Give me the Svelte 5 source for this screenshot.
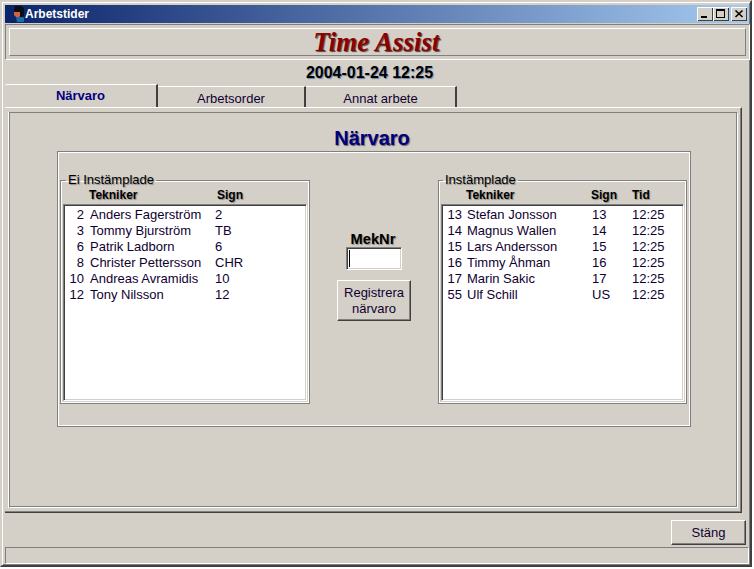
<script lang="ts">
  const left = [
    { nr: 2, name: "Anders Fagerström", sign: "2" },
    { nr: 3, name: "Tommy Bjurström", sign: "TB" },
    { nr: 6, name: "Patrik Ladborn", sign: "6" },
    { nr: 8, name: "Christer Pettersson", sign: "CHR" },
    { nr: 10, name: "Andreas Avramidis", sign: "10" },
    { nr: 12, name: "Tony Nilsson", sign: "12" },
  ];
  const right = [
    { nr: 13, name: "Stefan Jonsson", sign: "13", tid: "12:25" },
    { nr: 14, name: "Magnus Wallen", sign: "14", tid: "12:25" },
    { nr: 15, name: "Lars Andersson", sign: "15", tid: "12:25" },
    { nr: 16, name: "Timmy Åhman", sign: "16", tid: "12:25" },
    { nr: 17, name: "Marin Sakic", sign: "17", tid: "12:25" },
    { nr: 55, name: "Ulf Schill", sign: "US", tid: "12:25" },
  ];
  const tabs = ["Närvaro", "Arbetsorder", "Annat arbete"];
</script>

<div class="window">
  <div class="titlebar">
    <svg class="appicon" width="12" height="16" viewBox="0 0 12 16">
      <path d="M2 0h6l3 2v7l-1 2H7V6H2L1 4z" fill="#0c0c14" />
      <path d="M1 6h6v4l-1 1H3L1 9z" fill="#d8603a" />
      <path d="M3 11h7l1 1v4H4z" fill="#1f6aa8" />
    </svg>
    <span class="title">Arbetstider</span>
    <div class="winbtns">
      <span class="winbtn"><svg width="16" height="14" viewBox="0 0 16 14"><rect x="4" y="9" width="6" height="2" fill="#000" /></svg></span>
      <span class="winbtn"><svg width="16" height="14" viewBox="0 0 16 14"><path d="M3 2h9v9H3z M4 4v6h7V4z" fill="#000" fill-rule="evenodd" /></svg></span>
      <span class="winbtn close"><svg width="16" height="14" viewBox="0 0 16 14"><path d="M4.5 3.5l7 6.5M11.5 3.5l-7 6.5" stroke="#000" stroke-width="1.6" /></svg></span>
    </div>
  </div>

  <header class="brandwrap">
    <div class="brand">Time Assist</div>
  </header>

  <div class="clock">2004-01-24 12:25</div>

  <nav class="tabs">
    {#each tabs as tab, i}
      <div class="tab" class:active={i === 0}>{tab}</div>
    {/each}
  </nav>

  <main class="pageouter">
    <div class="page">
      <h1>Närvaro</h1>
      <div class="groupbox">
        <fieldset class="list-left">
          <legend>Ei Instämplade</legend>
          <div class="cols"><span class="c-name">Tekniker</span><span class="c-sign">Sign</span></div>
          <div class="listbox">
            {#each left as p}
              <div class="row">
                <span class="nr">{p.nr}</span><span class="name">{p.name}</span><span class="sign">{p.sign}</span>
              </div>
            {/each}
          </div>
        </fieldset>

        <div class="middle">
          <label class="mek" for="meknr">MekNr</label>
          <div class="inputbox"><input id="meknr" /><span class="caret"></span></div>
          <button class="reg">Registrera<br />närvaro</button>
        </div>

        <fieldset class="list-right">
          <legend>Instämplade</legend>
          <div class="cols"><span class="c-name">Tekniker</span><span class="c-sign">Sign</span><span class="c-tid">Tid</span></div>
          <div class="listbox">
            {#each right as p}
              <div class="row">
                <span class="nr">{p.nr}</span><span class="name">{p.name}</span><span class="sign">{p.sign}</span><span class="tid">{p.tid}</span>
              </div>
            {/each}
          </div>
        </fieldset>
      </div>
    </div>
  </main>

  <div class="actions"><button class="close-btn">Stäng</button></div>
  <div class="statusbar"></div>
</div>

<style>
  :global(body) {
    margin: 0;
    background: #fff;
    font-family: "Liberation Sans", Arial, sans-serif;
  }

  .window {
    box-sizing: border-box;
    width: 752px;
    height: 567px;
    background: #d4d0c8;
    border: 2px solid;
    border-color: #d4d0c8 #404040 #404040 #d4d0c8;
    box-shadow: inset 1px 1px 0 #fff, inset -1px -1px 0 #808080;
    padding: 3px 0 1px 3px;
    display: flex;
    flex-direction: column;
    color: #000;
  }

  .titlebar {
    height: 18px;
    flex: none;
    display: flex;
    align-items: center;
    background: linear-gradient(90deg, #0a246a, #a6caf0);
    padding: 0 2px 0 8px;
    margin: 0 1px 1px 0;
  }

  .appicon {
    flex: none;
  }

  .title {
    color: #fff;
    font-size: 12px;
    font-weight: bold;
  }

  .winbtns {
    margin-left: auto;
    display: flex;
  }

  .winbtn {
    box-sizing: border-box;
    width: 16px;
    height: 14px;
    background: #d4d0c8;
    box-shadow: inset 1px 1px 0 #fff, inset -1px -1px 0 #404040;
    display: block;
  }

  .winbtn svg {
    display: block;
  }

  .winbtn.close {
    margin-left: 2px;
  }

  .brandwrap {
    flex: none;
    box-sizing: border-box;
    height: 36px;
    padding: 3px;
    border: 1px solid;
    border-color: #808080 #fff #fff #808080;
  }

  .brand {
    box-sizing: border-box;
    height: 28px;
    padding-right: 2px;
    border: 1px solid;
    border-color: #fff #808080 #808080 #fff;
    text-align: center;
    font-family: "Liberation Serif", serif;
    font-size: 27px;
    line-height: 26px;
    font-weight: bold;
    font-style: italic;
    color: #8b0000;
    text-shadow: 1px 1px 1px #444;
  }

  .clock {
    flex: none;
    height: 24px;
    padding-right: 16px;
    text-align: center;
    font-size: 16px;
    line-height: 26px;
    font-weight: bold;
    text-shadow: 1px 1px 1px #6a86a8;
  }

  .tabs {
    flex: none;
    height: 23px;
    display: flex;
    align-items: flex-end;
  }

  .tab {
    box-sizing: border-box;
    width: 148px;
    height: 21px;
    background: #d4d0c8;
    border-top: 1px solid #fff;
    border-right: 2px solid #404040;
    text-align: center;
    font-size: 13px;
    line-height: 24px;
    color: #100030;
  }

  .tab:last-child {
    width: 151px;
  }

  .tab.active {
    width: 153px;
    height: 23px;
    font-weight: bold;
    color: #000080;
    line-height: 22px;
    border-top-left-radius: 2px;
  }

  .pageouter {
    flex: none;
    box-sizing: border-box;
    width: 737px;
    height: 406px;
    border-top: 1px solid #fff;
    border-right: 1px solid #404040;
    border-bottom: 1px solid #404040;
    box-shadow: inset -1px -1px 0 #808080;
    padding: 4px 3px 4px 4px;
  }

  .page {
    box-sizing: border-box;
    height: 396px;
    border: 1px solid;
    border-color: #808080 #fff #fff #808080;
    box-shadow: -1px 0 0 #fff, inset -1px -1px 0 #808080;
    padding-left: 47px;
  }

  h1 {
    margin: 0;
    padding-top: 13px;
    height: 25px;
    width: 630px;
    text-align: center;
    font-size: 20px;
    line-height: 24px;
    color: #000080;
    text-shadow: 1px 1px 1px #666;
  }

  .groupbox {
    box-sizing: border-box;
    width: 634px;
    height: 276px;
    border: 1px solid #808080;
    box-shadow: inset 1px 1px 0 #fff, inset -1px -1px 0 #fff;
    padding: 21px 3px 0 2px;
    display: flex;
    align-items: flex-start;
    justify-content: space-between;
  }

  fieldset {
    box-sizing: border-box;
    margin: 0;
    padding: 0 2px 2px 2px;
    width: 250px;
    height: 231px;
    border: 1px solid #808080;
    box-shadow: inset 1px 1px 0 #fff, inset -1px -1px 0 #fff;
  }

  .list-right {
    width: 249px;
  }

  legend {
    font-size: 13px;
    line-height: 14px;
    padding: 0 2px;
    margin-left: 3px;
    text-shadow: 1px 1px 1px #888;
  }

  .list-right legend {
    margin-left: 2px;
  }

  .cols {
    height: 14px;
    position: relative;
    font-size: 12px;
    line-height: 14px;
    font-weight: bold;
    text-shadow: 1px 1px 1px #888;
    margin: 1px 0 2px;
  }

  .cols span {
    position: absolute;
    top: 0;
  }

  .c-name { left: 26px; }
  .c-sign { left: 154px; }
  .list-right .c-name { left: 25px; }
  .list-right .c-sign { left: 150px; }
  .c-tid { left: 191px; }

  .listbox {
    box-sizing: border-box;
    height: 197px;
    background: #fff;
    border: 1px solid;
    border-color: #808080 #fff #fff #808080;
    box-shadow: inset 1px 1px 0 #404040, inset -1px -1px 0 #d4d0c8;
    padding-top: 2px;
    font-size: 13px;
    line-height: 16px;
    color: #100030;
  }

  .row {
    display: flex;
    height: 16px;
    white-space: nowrap;
  }

  .nr {
    width: 20px;
    text-align: right;
  }

  .name {
    margin-left: 6px;
    width: 125px;
  }

  .list-right .name {
    margin-left: 5px;
  }

  .sign {
    width: 40px;
  }

  .middle {
    width: 78px;
    padding-top: 59px;
    display: flex;
    flex-direction: column;
    align-items: center;
  }

  .mek {
    font-size: 14.67px;
    font-weight: bold;
    line-height: 15px;
    padding-right: 2px;
    text-shadow: 1px 1px 1px #888;
  }

  .inputbox {
    box-sizing: border-box;
    position: relative;
    width: 56px;
    height: 23px;
    background: #fff;
    border: 1px solid;
    border-color: #808080 #fff #fff #808080;
    box-shadow: inset 1px 1px 0 #404040, inset -1px -1px 0 #d4d0c8;
  }

  .inputbox input {
    box-sizing: border-box;
    display: block;
    width: 100%;
    height: 100%;
    border: 0;
    padding: 0;
    background: transparent;
    outline: none;
  }

  .caret {
    position: absolute;
    left: 2px;
    top: 2px;
    width: 1px;
    height: 17px;
    background: #000;
  }

  button {
    font-family: inherit;
    background: #d4d0c8;
    color: #100030;
    padding: 0;
    border: 1px solid;
    border-color: #fff #404040 #404040 #fff;
    box-shadow: inset -1px -1px 0 #808080;
  }

  .reg {
    margin-top: 10px;
    width: 74px;
    height: 41px;
    font-size: 13px;
    line-height: 16px;
  }

  .actions {
    flex: none;
    box-sizing: border-box;
    height: 34px;
    display: flex;
    justify-content: flex-end;
    align-items: flex-start;
    padding: 7px 4px 0 0;
  }

  .close-btn {
    width: 75px;
    height: 25px;
    font-size: 13px;
  }

  .statusbar {
    flex: none;
    box-sizing: border-box;
    height: 17px;
    margin-right: 1px;
    border: 1px solid;
    border-color: #808080 #fff #fff #808080;
  }
</style>
